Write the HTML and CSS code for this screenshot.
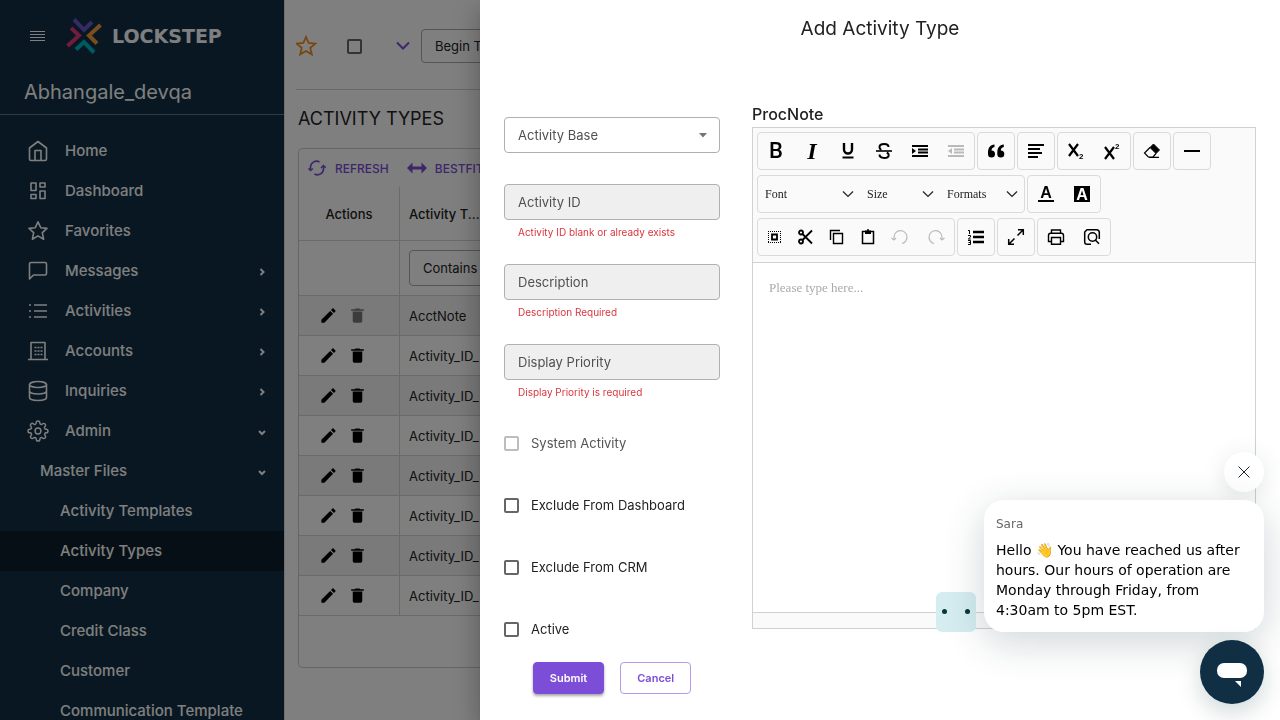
FILE: index.html
```html
<!DOCTYPE html>
<html lang="en">
<head>
<meta charset="utf-8">
<meta name="viewport" content="width=device-width, initial-scale=1">
<title>Add Activity Type</title>
<link rel="stylesheet" href="styles.css">
</head>
<body>
<svg class="sprite" aria-hidden="true">
  <symbol id="chev-right" viewBox="0 0 8 8"><path d="M2.500 1l3 3-3 3" fill="none" stroke="currentColor" stroke-width="2"/></symbol>
  <symbol id="chev-down" viewBox="0 0 8 8"><path d="M1 3l3 3 3-3" fill="none" stroke="currentColor" stroke-width="2"/></symbol>
  <symbol id="pencil" viewBox="0 0 24 24"><path d="M3 17.25V21h3.75L17.81 9.94l-3.75-3.75L3 17.25zM20.71 7.04a1 1 0 0 0 0-1.41l-2.34-2.34a1 1 0 0 0-1.41 0l-1.83 1.83 3.75 3.75 1.83-1.83z"/></symbol>
  <symbol id="trash" viewBox="0 0 24 24"><path d="M6 19a2 2 0 0 0 2 2h8a2 2 0 0 0 2-2V7H6v12zM20 4h-4.500l-1-1h-5l-1 1H4v2h16V4z"/></symbol>
  <symbol id="combo" viewBox="0 0 12 8"><path d="M1 1.500l5 5 5-5" fill="none" stroke="#222" stroke-width="1.200"/></symbol>
</svg>

<div class="app">
  <aside class="sidebar">
    <div class="brand">
      <button class="menu-btn" aria-label="Toggle menu"><svg width="16" height="12" viewBox="0 0 16 12"><path d="M0 1.500h15M0 4.500h15M0 7.500h15M0 10.500h15" stroke="currentColor"/></svg></button>
      <svg class="mark" width="36" height="36" viewBox="0 0 36 36" fill="none" stroke-width="4">
        <path d="M8 1.500l10 10.500 8-8" stroke="#6a56c8"/>
        <path d="M34.500 7L23 17.500l8 8" stroke="#f29a3c"/>
        <path d="M28 34.500L18 24l-8 7.500" stroke="#00b4c4"/>
        <path d="M1.500 28L13 17.500 5 10" stroke="#e0387c"/>
      </svg>
      <span class="wordmark">LOCKSTEP</span>
    </div>
    <div class="tenant">Abhangale_devqa</div>
    <nav class="nav">
      <a href="#"><svg viewBox="0 0 20 22"><path d="M1.500 8L10 1.500 18.500 8v11a1.500 1.500 0 0 1-1.500 1.500H3A1.500 1.500 0 0 1 1.500 19zM7 20v-9.500h6V20"/></svg><span>Home</span></a>
      <a href="#"><svg viewBox="0 0 20 22"><path d="M3 3h5v7.500H3zM12 3h5v4h-5zM12 11h5v7.500h-5zM3 14.500h5v4H3z"/></svg><span>Dashboard</span></a>
      <a href="#"><svg viewBox="0 0 20 22"><path d="M10 1.800l2.700 5.900 6.300.7-4.700 4.300 1.300 6.500-5.600-3.300-5.600 3.300 1.300-6.500L1 8.400l6.300-.7z"/></svg><span>Favorites</span></a>
      <a href="#"><svg viewBox="0 0 20 22"><path d="M1.500 19V4A1.500 1.500 0 0 1 3 2.500h14A1.500 1.500 0 0 1 18.500 4v9.500A1.500 1.500 0 0 1 17 15H5.500z"/></svg><span>Messages</span><svg class="chev"><use href="#chev-right"/></svg></a>
      <a href="#"><svg viewBox="0 0 20 22"><path d="M6 5h13M6 11h13M6 17h13M1 5h2M1 11h2M1 17h2"/></svg><span>Activities</span><svg class="chev"><use href="#chev-right"/></svg></a>
      <a href="#"><svg viewBox="0 0 20 22"><path d="M0 19.500h20M3 19V2.500h14V19M6.500 7.500h2M9.500 7.500h2M12.500 7.500h2M6.500 11h2M9.500 11h2M12.500 11h2M6.500 14.500h2M9.500 14.500h2M12.500 14.500h2"/></svg><span>Accounts</span><svg class="chev"><use href="#chev-right"/></svg></a>
      <a href="#"><svg viewBox="0 0 20 22"><ellipse cx="10" cy="4.500" rx="8.500" ry="3"/><path d="M1.500 4.500v13c0 1.700 3.800 3 8.500 3s8.500-1.300 8.500-3v-13M1.500 11c0 1.700 3.800 3 8.500 3s8.500-1.300 8.500-3"/></svg><span>Inquiries</span><svg class="chev"><use href="#chev-right"/></svg></a>
      <a href="#"><svg class="gear" viewBox="1 1 22 22"><circle cx="12" cy="12" r="3.200"/><path d="M19.400 15a1.650 1.650 0 0 0 .33 1.820l.06.06a2 2 0 1 1-2.830 2.830l-.06-.06a1.650 1.650 0 0 0-2.800 1.170V21a2 2 0 0 1-4 0v-.09a1.650 1.650 0 0 0-2.900-1.200l-.06.06a2 2 0 1 1-2.830-2.830l.06-.06A1.650 1.650 0 0 0 3.090 14H3a2 2 0 0 1 0-4h.09a1.650 1.650 0 0 0 1.200-2.900l-.06-.06a2 2 0 1 1 2.830-2.830l.06.06A1.650 1.650 0 0 0 10 3.090V3a2 2 0 0 1 4 0v.09a1.650 1.650 0 0 0 2.800 1.180l.06-.06a2 2 0 1 1 2.830 2.830l-.06.06A1.650 1.650 0 0 0 20.910 10H21a2 2 0 0 1 0 4h-.09a1.650 1.650 0 0 0-1.510 1z"/></svg><span>Admin</span><svg class="chev"><use href="#chev-down"/></svg></a>
      <a href="#" class="level2"><span>Master Files</span><svg class="chev"><use href="#chev-down"/></svg></a>
      <a href="#" class="level3"><span>Activity Templates</span></a>
      <a href="#" class="level3 current"><span>Activity Types</span></a>
      <a href="#" class="level3"><span>Company</span></a>
      <a href="#" class="level3"><span>Credit Class</span></a>
      <a href="#" class="level3"><span>Customer</span></a>
      <a href="#" class="level3"><span>Communication Template</span></a>
    </nav>
  </aside>

  <main class="main">
    <div class="topbar">
      <button class="plain" aria-label="Favorite"><svg width="22" height="22" viewBox="0 0 22 22" fill="none" stroke="#f08c1c" stroke-width="1.800"><path d="M10 2l2.700 6 6.600.6-5 4.300 1.500 6.500L10 16l-5.800 3.400 1.500-6.500-5-4.300L7.300 8z"/></svg></button>
      <input type="checkbox" class="box" aria-label="Select">
      <button class="plain" aria-label="More"><svg width="14" height="10" viewBox="0 0 14 10" fill="none" stroke="#7c4dd6" stroke-width="2"><path d="M1 1.500l6 6 6-6"/></svg></button>
      <button class="tour">Begin T</button>
    </div>
    <h1 class="page-title">ACTIVITY TYPES</h1>
    <section class="card">
      <div class="card-tools">
        <button class="tool"><svg width="20" height="18" viewBox="0 0 20 18" fill="none" stroke="currentColor" stroke-width="1.600"><path d="M3.500 11V8.500A6 6 0 0 1 12.500 3M16.500 7v2.500A6 6 0 0 1 7.500 15"/><path d="M1.500 9.200l2 2.300 2.400-2M14 8.800l2.500-2.300 2.200 2.200"/></svg>REFRESH</button>
        <button class="tool"><svg width="20" height="12" viewBox="0 0 20 12" fill="currentColor"><path d="M0 6l5.500-5.500V4.600h9V.5L20 6l-5.500 5.500V7.400h-9v4.100z"/></svg>BESTFIT</button>
      </div>
      <table class="grid">
        <thead>
          <tr class="head"><th>Actions</th><th>Activity T...</th></tr>
          <tr class="filter"><td></td><td><button class="contains">Contains</button></td></tr>
        </thead>
        <tbody>
          <tr><td><button class="act" aria-label="Edit"><svg><use href="#pencil"/></svg></button><button class="act" aria-label="Delete" disabled><svg><use href="#trash"/></svg></button></td><td>AcctNote</td></tr>
          <tr><td><button class="act" aria-label="Edit"><svg><use href="#pencil"/></svg></button><button class="act" aria-label="Delete"><svg><use href="#trash"/></svg></button></td><td>Activity_ID_</td></tr>
          <tr><td><button class="act" aria-label="Edit"><svg><use href="#pencil"/></svg></button><button class="act" aria-label="Delete"><svg><use href="#trash"/></svg></button></td><td>Activity_ID_</td></tr>
          <tr><td><button class="act" aria-label="Edit"><svg><use href="#pencil"/></svg></button><button class="act" aria-label="Delete"><svg><use href="#trash"/></svg></button></td><td>Activity_ID_</td></tr>
          <tr><td><button class="act" aria-label="Edit"><svg><use href="#pencil"/></svg></button><button class="act" aria-label="Delete"><svg><use href="#trash"/></svg></button></td><td>Activity_ID_</td></tr>
          <tr><td><button class="act" aria-label="Edit"><svg><use href="#pencil"/></svg></button><button class="act" aria-label="Delete"><svg><use href="#trash"/></svg></button></td><td>Activity_ID_</td></tr>
          <tr><td><button class="act" aria-label="Edit"><svg><use href="#pencil"/></svg></button><button class="act" aria-label="Delete"><svg><use href="#trash"/></svg></button></td><td>Activity_ID_</td></tr>
          <tr><td><button class="act" aria-label="Edit"><svg><use href="#pencil"/></svg></button><button class="act" aria-label="Delete"><svg><use href="#trash"/></svg></button></td><td>Activity_ID_</td></tr>
        </tbody>
      </table>
    </section>
  </main>
</div>

<div class="backdrop"></div>

<div class="drawer" role="dialog" aria-labelledby="drawer-title">
  <h2 class="drawer-title" id="drawer-title">Add Activity Type</h2>
  <div class="drawer-body">
    <form class="form">
      <div class="field select-field">
        <div class="control"><select id="base"><option></option></select><label for="base">Activity Base</label><svg class="caret" width="10" height="5" viewBox="0 0 10 5"><path d="M1 0h8L5 4.500z" fill="#757575"/></svg></div>
      </div>
      <div class="field">
        <div class="control"><input type="text" id="aid"><label for="aid">Activity ID</label></div>
        <p class="error">Activity ID blank or already exists</p>
      </div>
      <div class="field">
        <div class="control"><input type="text" id="desc"><label for="desc">Description</label></div>
        <p class="error">Description Required</p>
      </div>
      <div class="field">
        <div class="control"><input type="text" id="prio"><label for="prio">Display Priority</label></div>
        <p class="error">Display Priority is required</p>
      </div>
      <label class="check off"><input type="checkbox" class="box" disabled>System Activity</label>
      <label class="check"><input type="checkbox" class="box">Exclude From Dashboard</label>
      <label class="check"><input type="checkbox" class="box">Exclude From CRM</label>
      <label class="check"><input type="checkbox" class="box">Active</label>
      <div class="buttons"><button type="button" class="btn primary">Submit</button><button type="button" class="btn">Cancel</button></div>
    </form>

    <section class="note">
      <label class="note-label" for="note">ProcNote</label>
      <div class="editor">
        <div class="toolbar">
          <div class="bar">
            <div class="group">
              <button aria-label="Bold"><span class="g-bold">B</span></button>
              <button aria-label="Italic"><span class="g-italic">I</span></button>
              <button aria-label="Underline"><svg viewBox="0 0 20 20"><path d="M6 2v6.500a4 4 0 0 0 8 0V2" fill="none" stroke="#000" stroke-width="2.400"/><path d="M4.500 16.500h11" stroke="#000" stroke-width="2"/></svg></button>
              <button aria-label="Strikethrough"><svg viewBox="0 0 20 20" fill="none" stroke="#000" stroke-width="2"><path d="M14.500 6c0-2-1.800-3-4.300-3S5.500 4.200 5.500 6.200c0 1.200.7 2 1.800 2.600M12.800 11.500c1.200.6 1.900 1.300 1.900 2.400 0 1.900-1.900 3-4.500 3s-4.700-1.200-4.700-3.300"/><path d="M2 10h16" stroke-width="1.600"/></svg></button>
              <button aria-label="Increase indent"><svg viewBox="0 0 20 20" stroke="#000" stroke-width="2"><path d="M2 5h16M8 8.500h10M8 11.500h10M2 15h16"/><path d="M2 7v6l4-3z" fill="#000" stroke="none"/></svg></button>
              <button aria-label="Decrease indent" disabled><svg viewBox="0 0 20 20" stroke="#000" stroke-width="2"><path d="M2 5h16M8 8.500h10M8 11.500h10M2 15h16"/><path d="M6 7v6l-4-3z" fill="#000" stroke="none"/></svg></button>
            </div>
            <div class="group"><button aria-label="Quote"><svg viewBox="0 0 20 20"><path d="M8.500 3.500C4 4 2 7 2 11.500V13a3.500 3.500 0 1 0 3.500-3.500C5.500 7.500 6.500 6.500 8.500 6zM17.800 3.500c-4.500.5-6.500 3.500-6.500 8V13a3.500 3.500 0 1 0 3.500-3.500c0-2 1-3 3-3.500z"/></svg></button></div>
            <div class="group"><button aria-label="Align left"><svg viewBox="0 0 20 20" stroke="#000" stroke-width="2"><path d="M2 4h16M2 8h12M2 12h14M2 16h10"/></svg></button></div>
            <div class="group">
              <button aria-label="Subscript"><svg viewBox="0 0 20 20"><path d="M3 3l9 12M12 3L3 15" stroke="#000" stroke-width="2.200"/><text x="13" y="18" class="g-small">2</text></svg></button>
              <button aria-label="Superscript"><svg viewBox="0 0 20 20"><path d="M3 6l9 12M12 6L3 18" stroke="#000" stroke-width="2.200"/><text x="13" y="8" class="g-small">2</text></svg></button>
            </div>
            <div class="group"><button aria-label="Remove format"><svg viewBox="0 0 20 20"><path d="M8 6.500l3.500-3.500 6 6L14 12.500z" stroke="#000" stroke-linejoin="round"/><path d="M8 6.500L2.500 12l3.800 4H11l3-3.500M7 16.400h10" fill="none" stroke="#000" stroke-width="1.200"/></svg></button></div>
            <div class="group"><button aria-label="Horizontal line"><svg viewBox="0 0 20 20"><path d="M2 10h16" stroke="#000" stroke-width="2"/></svg></button></div>
          </div>
          <div class="bar">
            <div class="group">
              <span class="combo wide"><select aria-label="Font"><option>Font</option></select><svg><use href="#combo"/></svg></span>
              <span class="combo"><select aria-label="Size"><option>Size</option></select><svg><use href="#combo"/></svg></span>
              <span class="combo mid"><select aria-label="Formats"><option>Formats</option></select><svg><use href="#combo"/></svg></span>
            </div>
            <div class="group">
              <button aria-label="Text colour"><svg viewBox="0 0 20 20"><text x="10" y="14" class="g-a">A</text><path d="M2 17h16" stroke="#000" stroke-width="2"/></svg></button>
              <button aria-label="Background colour"><svg viewBox="0 0 20 20"><path d="M2 2h16v16H2z"/><text x="10" y="16" class="g-a light">A</text></svg></button>
            </div>
          </div>
          <div class="bar">
            <div class="group">
              <button class="slim" aria-label="Select all"><svg viewBox="0 0 20 20" fill="none" stroke="#000"><path d="M4 4.500h13M4 15.500h13M4.500 4v12M16.500 4v12" stroke-dasharray="1 1"/><path d="M8 7.500h5v5H8z" stroke-width="1.800"/></svg></button>
              <button class="slim" aria-label="Cut"><svg viewBox="0 0 20 20" fill="none" stroke="#000" stroke-width="1.800"><circle cx="6" cy="5.500" r="2"/><circle cx="6" cy="14.500" r="2"/><path d="M7.500 7l9.500 9.500M7.500 13L17 3.500"/></svg></button>
              <button class="slim" aria-label="Copy"><svg viewBox="0 0 20 20" fill="none" stroke="#000" stroke-width="1.400"><path d="M7.500 6.500h9v10h-9zM4.500 13V3.500H14"/></svg></button>
              <button class="slim" aria-label="Paste"><svg viewBox="0 0 20 20" fill="none" stroke="#000" stroke-width="1.500"><path d="M5.500 4.500h11v12h-11z"/><path d="M8 3.500h6V7H8z" fill="#000" stroke="none"/><path d="M10 3h2"/></svg></button>
              <button aria-label="Undo" disabled><svg viewBox="0 0 20 20" fill="none" stroke="#000" stroke-width="1.200"><path d="M4 12V10a6.500 6.500 0 1 1 8 6.500"/><path d="M1.500 11L4 13l2-2"/></svg></button>
              <button aria-label="Redo" disabled><svg viewBox="0 0 20 20" fill="none" stroke="#000" stroke-width="1.200"><path d="M16 12V10a6.500 6.500 0 1 0-8 6.500"/><path d="M18.500 11L16 13l-2-2"/></svg></button>
            </div>
            <div class="group"><button aria-label="Numbered list"><svg viewBox="0 0 20 20" stroke="#000"><path d="M7 5h11M7 10h11M7 15h11" stroke-width="2.400"/><path d="M2 3.500h1.500V7M2 8.500h2.500v1.500L2.300 12h2.500M2 13.500h2.500v4H2M2.500 15.500h2" fill="none"/></svg></button></div>
            <div class="group"><button aria-label="Full screen"><svg viewBox="0 0 20 20" fill="none" stroke="#000" stroke-width="1.500"><path d="M12 2.700h5.300V8M17 3l-5.500 5.500M8 17.300H2.700V12M3 17l5.500-5.500"/></svg></button></div>
            <div class="group">
              <button aria-label="Print"><svg viewBox="0 0 20 20" fill="none" stroke="#000" stroke-width="1.400"><path d="M5.500 6V3h9v3M5.500 14.500h-3v-6c0-1.500.7-2.300 2-2.300h11c1.300 0 2 .8 2 2.300v6h-3"/><path d="M5.500 10.500h9v6.800h-9z"/></svg></button>
              <button aria-label="Preview"><svg viewBox="0 0 20 20" fill="none" stroke="#000" stroke-width="1.500"><path d="M9 17.300H5A2.300 2.300 0 0 1 2.700 15V5L5 2.700h9.500c1.700 0 2.800 1.100 2.800 2.800V12"/><circle cx="10.500" cy="10" r="4.200"/><path d="M13.300 13l3.700 3.700"/></svg></button>
            </div>
          </div>
        </div>
        <textarea id="note" placeholder="Please type here..."></textarea>
        <div class="status"></div>
      </div>
    </section>
  </div>
</div>

<div class="chat">
  <button class="chat-close" aria-label="Close message"><svg width="12" height="12" viewBox="0 0 12 12" stroke="#1c2430"><path d="M.5.5l11 11M11.500.5l-11 11"/></svg></button>
  <div class="chat-row">
    <svg class="bot" width="40" height="40" viewBox="0 0 40 40"><circle cx="8.500" cy="19.500" r="2.500" fill="#06373d"/><circle cx="31.500" cy="19.500" r="2.500" fill="#06373d"/></svg>
    <div class="bubble">
      <div class="from">Sara</div>
      <div class="msg">Hello 👋 You have reached us after hours. Our hours of operation are Monday through Friday, from 4:30am to 5pm EST.</div>
    </div>
  </div>
  <button class="launcher" aria-label="Open chat"><svg width="64" height="64" viewBox="0 0 64 64" fill="#fff"><rect x="17" y="23" width="30" height="15" rx="7"/><path d="M35 41h6v6z"/></svg></button>
</div>
</body>
</html>
```

FILE: styles.css
```css
* { box-sizing: border-box; }
body {
  margin: 0;
  height: 100vh;
  overflow: hidden;
  font-family: Inter, "Liberation Sans", sans-serif;
  font-size: 13px;
  color: #222;
  background: #fff;
}
button, input, select, textarea { font: inherit; color: inherit; margin: 0; }
button { padding: 0; border: 0; background: none; cursor: pointer; }
a { color: inherit; text-decoration: none; }
.sprite { position: absolute; width: 0; height: 0; }
.app { display: flex; height: 100%; }

/* Sidebar */
.sidebar { flex: 0 0 284px; overflow: hidden; background: #102f44; color: #fff; }
.brand { display: flex; align-items: center; height: 71px; padding-left: 30px; }
.menu-btn, .mark { display: flex; flex: none; }
.mark { margin: 0 10px 0 20px; }
.wordmark { font-family: "DejaVu Sans", sans-serif; font-size: 19px; font-weight: 700; }
.tenant {
  height: 44px;
  padding-left: 24px;
  border-bottom: 1px solid #5d7282;
  font-size: 20px;
  line-height: 43px;
}
.nav { padding-top: 16px; font-size: 15px; line-height: 18px; font-weight: 500; }
.nav a { display: flex; align-items: center; height: 40px; padding: 0 18px 0 28px; }
.nav a > svg:first-child { width: 20px; height: 22px; margin-right: 17px; overflow: visible; fill: none; stroke: currentColor; stroke-width: 1.6; stroke-linejoin: round; }
.nav span { flex: 1; }
.nav .chev { width: 8px; height: 8px; margin-top: 2px; }
.nav .level2 { padding-left: 40px; }
.nav .level3 { padding-left: 60px; }
.nav .current { background: #0b1f2b; }

/* Page behind the drawer */
.main { flex: 1; min-width: 0; padding: 0 12px 0 11px; border-left: 1px solid #e0e0e0; }
.topbar { display: flex; align-items: center; height: 90px; padding-top: 3px; border-bottom: 1px solid #d0d0d0; }
.plain { display: flex; }
.topbar .box { margin: 0 34px 0 29px; }
.tour, .contains { height: 36px; padding: 0 13px; border: 1px solid #aaa; border-radius: 4px; }
.tour { height: 34px; margin-left: 11px; }
.box {
  appearance: none;
  flex: none;
  width: 15px;
  height: 15px;
  border: 2px solid #666;
  border-radius: 2px;
  background: transparent;
}
.page-title { margin: 16px 0 0 2px; font-size: 18px; line-height: 26px; font-weight: 400; }
.card { height: 520px; margin: 16px 0 0 2px; border: 1px solid #ccc; border-radius: 4px; }
.card-tools { display: flex; align-items: center; height: 38px; padding-left: 8px; gap: 18px; color: #7c4dd6; }
.tool { display: flex; align-items: center; gap: 8px; font-size: 12px; font-weight: 500; }
.grid { width: 100%; border-spacing: 0; table-layout: fixed; }
.grid th, .grid td { padding: 0 9px; border-bottom: 1px solid #d4d4d4; text-align: left; }
.grid th { font-size: 13px; font-weight: 500; }
.grid tr > :first-child { width: 101px; padding: 0; border-right: 1px solid #d4d4d4; text-align: center; }
.grid tbody tr > :first-child { padding-right: 12px; }
.head { height: 54px; }
.filter { height: 55px; }
.grid tbody tr { height: 40px; }
.grid tbody tr:nth-child(odd) { background: #f4f4f4; }
.act { display: inline-flex; margin: 0 5px; vertical-align: middle; }
.act svg { width: 19px; height: 19px; }
.act:disabled { opacity: .5; }

.backdrop { position: fixed; inset: 0; background: rgba(0, 0, 0, .5); }

/* Drawer */
.drawer {
  position: fixed;
  inset: 0 0 0 auto;
  width: 800px;
  max-width: 100%;
  padding: 0 24px;
  background: #fff;
  box-shadow: 0 8px 10px -5px rgba(0, 0, 0, .2), 0 16px 24px 2px rgba(0, 0, 0, .14), 0 6px 30px 5px rgba(0, 0, 0, .12);
}
.drawer-title { margin: 0; font-size: 19px; line-height: 58px; font-weight: 400; text-align: center; }
.drawer-body { display: flex; gap: 32px; padding-top: 43px; }
.form { flex: 0 0 216px; padding-top: 16px; }
.field { height: 56px; margin-bottom: 24px; }
.select-field { height: 36px; margin-bottom: 31px; }
.control { display: grid; align-items: center; }
.control > * { grid-area: 1 / 1; }
.control input, .control select {
  appearance: none;
  width: 100%;
  height: 36px;
  padding: 0 13px;
  border: 1px solid #b0b0b0;
  border-radius: 4px;
  background: #efefef;
}
.control select { background: #fff; }
.control label { padding-left: 14px; color: #505050; pointer-events: none; }
.caret { justify-self: end; margin-right: 12px; pointer-events: none; }
.error { margin: 0; padding-left: 14px; color: #d9363e; font-size: 10px; line-height: 24px; }
.check { display: flex; align-items: center; gap: 12px; height: 38px; margin-bottom: 24px; }
.off { color: #555; }
.off .box { border-color: #bdbdbd; }
.buttons { display: flex; justify-content: center; gap: 16px; margin-top: -10px; }
.btn { height: 32px; padding: 0 16px; border: 1px solid #b79ae8; border-radius: 4px; color: #7c4dd6; font-size: 11px; font-weight: 600; }
.primary { border-color: #7c4dd6; background: #7c4dd6; color: #fff; box-shadow: 0 2px 3px rgba(0, 0, 0, .35); }

/* Rich text editor */
.note { flex: 1; min-width: 0; }
.note-label { display: block; font-size: 16px; line-height: 26px; font-weight: 500; }
.editor { display: flex; flex-direction: column; border: 1px solid #d1d1d1; }
.toolbar { display: flex; flex-direction: column; gap: 5px; padding: 4px 4px 6px; border-bottom: 1px solid #d1d1d1; background: #fafafa; }
.bar { display: flex; gap: 2px; }
.group { display: flex; height: 38px; border: 1px solid #dadada; border-radius: 4px; }
.group button { display: flex; align-items: center; justify-content: center; width: 36px; color: #000; }
.group .slim { width: 31px; }
.group button svg { width: 20px; height: 20px; }
.group button:disabled { opacity: .25; }
.combo { display: grid; align-items: center; width: 80px; }
.wide { width: 102px; }
.mid { width: 84px; }
.combo > * { grid-area: 1 / 1; }
.combo select { appearance: none; width: 100%; height: 36px; padding: 0 7px; border: 0; background: none; font-family: "Liberation Serif", serif; font-size: 12px; }
.combo svg { justify-self: end; width: 12px; height: 8px; margin-right: 6px; pointer-events: none; }
.g-bold { font: 500 22px/36px Roboto, sans-serif; }
.g-italic { font: italic 700 24px/36px "Liberation Serif", serif; }
.g-small { font: 700 8px "Liberation Sans", sans-serif; }
.g-a { font: 700 16px "Liberation Sans", sans-serif; text-anchor: middle; }
.light { fill: #fff; }
.editor textarea {
  display: block;
  height: 349px;
  padding: 15px 16px;
  border: 0;
  outline: 0;
  resize: none;
  font: 13px/20px "Liberation Serif", serif;
}
.editor textarea::placeholder { color: #aaa; }
.status { height: 16px; border-top: 1px solid #d1d1d1; background: #fafafa; }

/* Chat widget */
.chat { position: fixed; right: 16px; bottom: 16px; display: flex; flex-direction: column; align-items: flex-end; gap: 8px; font-family: "DejaVu Sans", sans-serif; }
.chat-close { display: flex; align-items: center; justify-content: center; width: 40px; height: 40px; border-radius: 50%; background: #fff; box-shadow: 0 4px 24px rgba(9, 50, 50, .12); }
.chat-row { display: flex; align-items: flex-end; gap: 8px; }
.bot { border-radius: 6px; background: #d5edf0; }
.bubble { width: 280px; padding: 14px 12px 12px; border-radius: 20px; background: #fff; box-shadow: 0 10px 40px rgba(9, 50, 50, .2); }
.from { margin-bottom: 6px; color: #666; font-size: 12px; line-height: 20px; }
.msg { color: #000; font-size: 14px; line-height: 20px; }
.launcher { display: flex; width: 64px; height: 64px; border-radius: 50%; background: #102f44; box-shadow: 0 8px 24px rgba(9, 50, 50, .2); }
```
